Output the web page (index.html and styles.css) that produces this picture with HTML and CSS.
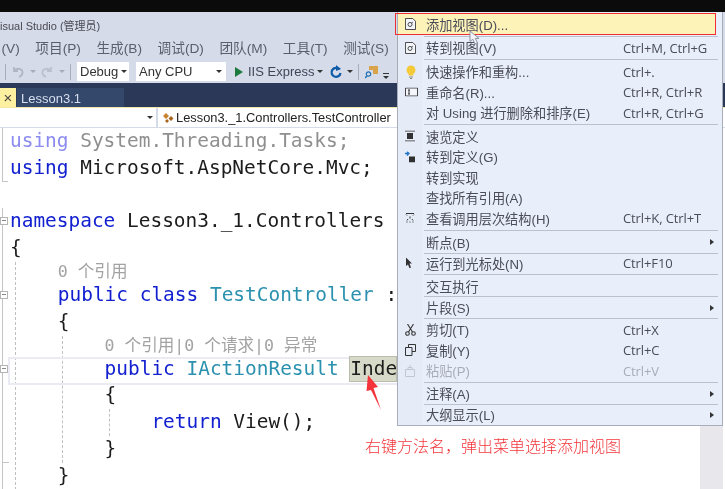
FILE: index.html
```html
<!DOCTYPE html>
<html lang="zh-CN">
<head>
<meta charset="utf-8">
<title>Visual Studio</title>
<link rel="stylesheet" href="styles.css">
</head>
<body>
<div class="page">
  <div class="blackbar"></div>
  <div class="chrome">
    <div class="title">isual Studio (管理员)</div>
    <div class="menubar">
      <span>(V)</span><span>项目(P)</span><span>生成(B)</span><span>调试(D)</span><span>团队(M)</span><span>工具(T)</span><span>测试(S)</span>
    </div>
    <div class="toolbar">
      <i class="vsep"></i>
      <svg class="undo" width="14" height="14" viewBox="0 0 14 14"><path d="M3 2v4h4M3.500 5.500C6 3 11 3 11.500 7c.3 2.500-1.500 4-3.500 5" fill="none" stroke="#b0b5c2" stroke-width="1.800"/></svg>
      <i class="caret dim c-undo"></i>
      <svg class="redo" width="14" height="14" viewBox="0 0 14 14"><path d="M11 2v4H7M10.500 5.500C8 3 3 3 2.500 7c-.3 2.500 1.500 4 3.500 5" fill="none" stroke="#bbc0cc" stroke-width="1.800"/></svg>
      <i class="caret dim c-redo"></i>
      <i class="vsep v2"></i>
      <div class="combo debug">Debug<i class="caret"></i></div>
      <div class="combo cpu">Any CPU<i class="caret"></i></div>
      <svg class="play" width="10" height="12" viewBox="0 0 10 12"><path d="M1 1l8 5-8 5z" fill="#1e7a3c"/></svg>
      <span class="iis">IIS Express</span><i class="caret c-iis"></i>
      <svg class="refresh" width="14" height="14" viewBox="0 0 14 14"><path d="M10.500 4.500A4.500 4.500 0 1 0 11.500 8" fill="none" stroke="#0e5ca8" stroke-width="2.200"/><path d="M7 0l5 4-5 2z" fill="#0e5ca8"/></svg>
      <i class="caret c-ref"></i>
      <i class="vsep v3"></i>
      <svg class="find" width="14" height="14" viewBox="0 0 14 14"><path d="M4 1h9v8H8V5H4z" fill="#d9a34c"/><circle cx="3.500" cy="9" r="2.200" fill="none" stroke="#1f6fb5" stroke-width="1.200"/><path d="M2 11l-2 2" stroke="#1f6fb5" stroke-width="1.400"/></svg>
      <svg class="more" width="6" height="7" viewBox="0 0 6 7"><path d="M0 .5h6" stroke="#333"/><path d="M0 3h6L3 6z" fill="#333"/></svg>
    </div>
    <div class="tabstrip">
      <div class="tab-active">×</div>
      <div class="tab">Lesson3.1</div>
    </div>
    <div class="navbar">
      <div class="nav-field left"><i class="caret"></i></div>
      <div class="nav-field right">
        <svg width="12" height="12" viewBox="0 0 12 12"><path d="M4 1l3 3-3 3-3-3z" fill="#c9822e"/><path d="M9 4l2.500 2.500L9 9 6.500 6.500zM5 7l2 2-2 2-2-2z" fill="#a8641c"/></svg>
        <span>Lesson3._1.Controllers.TestController</span>
      </div>
    </div>
  </div>

  <div class="editor">
    <div class="margin usings">
      <div class="line dim"><b class="kw">using</b> System.Threading.Tasks;</div>
      <div class="line"><b class="kw">using</b> Microsoft.AspNetCore.Mvc;</div>
    </div>
    <div class="line blank"></div>
    <div class="margin ns">
      <div class="line"><i class="fold"></i><b class="kw">namespace</b> Lesson3._1.Controllers</div>
      <div class="line">{</div>
      <div class="scope s1">
        <div class="lens">0 个引用</div>
        <div class="line"><i class="fold f2"></i><b class="kw">public</b> <b class="kw">class</b> <b class="ty">TestController</b> :</div>
        <div class="line">{</div>
        <div class="scope s2">
          <div class="lens">0 个引用|0 个请求|0 异常</div>
          <div class="line current"><i class="fold f3"></i><b class="kw">public</b> <b class="ty">IActionResult</b> <span class="sel">Inde</span></div>
          <div class="line">{</div>
          <div class="scope s3">
            <div class="line"><b class="kw">return</b> View();</div>
          </div>
          <div class="line end">}</div>
        </div>
        <div class="line">}</div>
      </div>
    </div>
    <div class="scrollbar"></div>
  </div>

  <svg class="arrow" width="20" height="38" viewBox="0 0 20 38"><path d="M3 0l10 12-4.500 1L16 35 6 15 1.500 16z" fill="#f5333a"/></svg>
  <div class="note">右键方法名，弹出菜单选择添加视图</div>

  <div class="menu">
    <div class="item first"><svg class="ico" width="11" height="12" viewBox="0 0 12 13"><use href="#doc"/></svg><span class="lbl">添加视图(D)...</span></div>
    <i class="sep mid"></i>
    <div class="item"><svg class="ico" width="11" height="12" viewBox="0 0 12 13"><use href="#doc"/></svg><span class="lbl">转到视图(V)</span><span class="key">Ctrl+M, Ctrl+G</span></div>
    <i class="sep"></i>
    <div class="item"><svg class="ico" width="12" height="15" viewBox="0 0 12 15"><path d="M6 1a4.500 4.500 0 0 0-2.500 8.200V11h5V9.200A4.500 4.500 0 0 0 6 1z" fill="#f4c93a"/><path d="M4 12.500h4M5 14h2" stroke="#8a8a80"/></svg><span class="lbl">快速操作和重构...</span><span class="key">Ctrl+.</span></div>
    <div class="item"><svg class="ico" width="13" height="9" viewBox="0 0 13 9"><path d="M.5.500h12v8H.500z" fill="#f3f5fb" stroke="#444"/><path d="M3 2.500h2M4 2.500v4M3 6.500h2" stroke="#333"/></svg><span class="lbl">重命名(R)...</span><span class="key">Ctrl+R, Ctrl+R</span></div>
    <div class="item"><span class="lbl">对 Using 进行删除和排序(E)</span><span class="key">Ctrl+R, Ctrl+G</span></div>
    <i class="sep"></i>
    <div class="item"><svg class="ico" width="10" height="11" viewBox="0 0 10 11"><path d="M0 .5h10M0 10.500h10" stroke="#333"/><path d="M2 2.500h6v6H2z" fill="#333"/></svg><span class="lbl">速览定义</span></div>
    <div class="item"><svg class="ico" width="11" height="11" viewBox="0 0 11 11"><path d="M0 2h3M2 0l2 2-2 2" fill="none" stroke="#1c72c4" stroke-width="1.300"/><path d="M4 5h6v6H4z" fill="#2f2f2f"/></svg><span class="lbl">转到定义(G)</span></div>
    <div class="item"><span class="lbl">转到实现</span></div>
    <div class="item"><span class="lbl">查找所有引用(A)</span></div>
    <div class="item"><svg class="ico" width="10" height="10" viewBox="0 0 10 10"><path d="M1 .5h8M1 1.500l1 1M9 1.500l-1 1M5 3.500v2M1.500 9h1M7.500 9h1M4.500 9h1M3 6l-1 1.500M7 6l1 1.500" stroke="#333" fill="none"/></svg><span class="lbl">查看调用层次结构(H)</span><span class="key">Ctrl+K, Ctrl+T</span></div>
    <i class="sep"></i>
    <div class="item"><span class="lbl">断点(B)</span><i class="sub"></i></div>
    <i class="sep tight"></i>
    <div class="item"><svg class="ico" width="8" height="11" viewBox="0 0 8 11"><path d="M1 0l6 6H4.500L6 10l-1.500.7L3 7 1 8.500z" fill="#333"/></svg><span class="lbl">运行到光标处(N)</span><span class="key">Ctrl+F10</span></div>
    <i class="sep mid"></i>
    <div class="item"><span class="lbl">交互执行</span></div>
    <i class="sep thin"></i>
    <div class="item"><span class="lbl">片段(S)</span><i class="sub"></i></div>
    <i class="sep thin"></i>
    <div class="item"><svg class="ico" width="11" height="12" viewBox="0 0 11 12"><path d="M2.500 0l5 8M8.500 0l-5 8" stroke="#333" stroke-width="1.100" fill="none"/><circle cx="2.500" cy="9.500" r="1.800" fill="none" stroke="#333" stroke-width="1.100"/><circle cx="8.500" cy="9.500" r="1.800" fill="none" stroke="#333" stroke-width="1.100"/></svg><span class="lbl">剪切(T)</span><span class="key">Ctrl+X</span></div>
    <div class="item"><svg class="ico" width="11" height="12" viewBox="0 0 11 12"><path d="M3.500 3V.5h7v7H7" fill="none" stroke="#333"/><path d="M.5 3.500h6.500v8H.500z" fill="none" stroke="#333"/></svg><span class="lbl">复制(Y)</span><span class="key">Ctrl+C</span></div>
    <div class="item off"><svg class="ico" width="10" height="12" viewBox="0 0 10 12"><path d="M.5 4.500h9v7h-9zM3 4.500V2.500h4v2" fill="none" stroke="#c2c6d0"/><path d="M4 1h2" stroke="#c2c6d0"/></svg><span class="lbl">粘贴(P)</span><span class="key">Ctrl+V</span></div>
    <i class="sep mid"></i>
    <div class="item"><span class="lbl">注释(A)</span><i class="sub"></i></div>
    <i class="sep tight"></i>
    <div class="item"><span class="lbl">大纲显示(L)</span><i class="sub"></i></div>
  </div>
  <div class="redbox"></div>
  <svg class="cursor" width="12" height="15" viewBox="0 0 12 15"><path d="M1 1v10.500l2.800-2.300L6 14l2.500-1-2.200-4.600H10z" fill="#f4f5f8" stroke="#8d93a3"/></svg>

  <svg class="defs" width="0" height="0"><defs><g id="doc"><path d="M.5.500h8l3 3v9H.500z" fill="#f3f5fb" stroke="#3c3c3c"/><circle cx="5.500" cy="7" r="2.200" fill="none" stroke="#3c3c3c"/><path d="M7 5.500l1.500-1" stroke="#3c3c3c"/></g></defs></svg>
</div>
</body>
</html>
```

FILE: styles.css
```css
* { box-sizing: border-box; }
html, body { margin: 0; padding: 0; background: #fff; }
.page {
  position: relative;
  width: 725px;
  height: 489px;
  overflow: hidden;
  font-family: "Noto Sans CJK SC", "Liberation Sans", sans-serif;
  filter: blur(0.35px);
}
.blackbar { height: 12px; background: #0b0b0b; }
.chrome { background: #d6dbe9; }
.title {
  height: 25px;
  padding-top: 6px;
  font-size: 11px;
  line-height: 16px;
  color: #4a4a52;
  font-family: "Liberation Sans", "Noto Sans CJK SC", sans-serif;
  white-space: nowrap;
}
.menubar {
  display: flex;
  gap: 15.500px;
  height: 23px;
  padding-left: 1.500px;
  font-size: 13.700px;
  line-height: 23px;
  color: #5b5f6a;
  white-space: nowrap;
  font-family: "Liberation Sans", "Noto Sans CJK SC", sans-serif;
}
.toolbar {
  display: flex;
  align-items: center;
  height: 23px;
  padding-left: 5px;
}
.vsep { width: 1px; height: 16px; background: #a9aebc; flex: none; }
.vsep.v2 { margin-left: 5px; }
.vsep.v3 { margin-left: 5px; }
.undo { margin-left: 5px; flex: none; }
.redo { margin-left: 4px; flex: none; }
.caret {
  display: inline-block;
  width: 0; height: 0;
  border-left: 3px solid transparent;
  border-right: 3px solid transparent;
  border-top: 3px solid #333;
  flex: none;
}
.caret.dim { border-top-color: #a6abb8; }
.c-undo { margin-left: 5px; }
.c-redo { margin-left: 5px; }
.c-iis { margin-left: 3px; }
.c-ref { margin-left: 4px; }
.combo {
  display: flex;
  align-items: center;
  justify-content: space-between;
  height: 19px;
  background: #fff;
  font-family: "Liberation Sans", sans-serif;
  font-size: 13px;
  color: #333;
  padding: 0 2px 0 3px;
}
.combo.debug { width: 52px; margin-left: 6px; overflow: hidden; }
.combo.cpu { width: 90px; margin-left: 7px; padding-right: 4px; }
.play { margin-left: 8px; flex: none; }
.iis { margin-left: 4px; width: 66px; font-family: "Liberation Sans", sans-serif; font-size: 13px; color: #3f4658; white-space: nowrap; }
.refresh { margin-left: 6px; flex: none; }
.find { margin-left: 6px; flex: none; }
.more { margin: 10px 0 0 4px; flex: none; }
.tabstrip {
  display: flex;
  height: 25px;
  padding-top: 5px;
  background: #2b3857;
  border-bottom: 1px solid #f0e7a8;
}
.tab-active {
  width: 16px;
  background: #fdf0a0;
  color: #444;
  font: 15px/19px "Liberation Sans", sans-serif;
  text-align: center;
}
.tab {
  width: 107px;
  margin-left: 1px;
  padding-left: 4px;
  background: #34486c;
  color: #d8dfee;
  font: 13px/21px "Liberation Sans", sans-serif;
}
.navbar {
  display: flex;
  height: 20px;
  gap: 2px;
  padding-bottom: 1px;
}
.nav-field { background: #fff; display: flex; align-items: center; height: 19px; }
.nav-field.left { width: 156px; justify-content: flex-end; padding-right: 3px; }
.nav-field.right {
  flex: 1;
  padding-left: 4px;
  gap: 2px;
  font: 12.850px "Liberation Sans", sans-serif;
  color: #222;
  white-space: nowrap;
  overflow: hidden;
}
.nav-field svg { flex: none; }

.editor {
  position: relative;
  height: 361px;
  overflow: hidden;
  padding-left: 2px;
  background: #fff;
  font-family: "DejaVu Sans Mono", monospace;
  font-size: 19.450px;
  color: #1c1c1c;
}
.line {
  position: relative;
  height: 26.800px;
  line-height: 26.800px;
  white-space: pre;
}
.line b { font-weight: 400; }
.kw { color: #1220d0; }
.ty { color: #2b91af; }
.dim { color: #8f8f8f; }
.dim .kw { color: #8b8bf0; }
.margin { border-left: 1px solid #c4c4c4; padding-left: 7px; }
.usings { position: relative; }
.usings::after {
  content: "";
  position: absolute;
  left: -1px;
  bottom: 0;
  width: 6px;
  border-bottom: 1px solid #c4c4c4;
}
.end::before {
  content: "";
  position: absolute;
  left: -102px;
  bottom: 0;
  width: 6px;
  border-bottom: 1px solid #c4c4c4;
}
.blank { padding-left: 8px; }
.fold {
  position: absolute;
  left: -10px;
  top: 9px;
  width: 8px;
  height: 8px;
  background: #fff;
  border: 1px solid #b4b4b4;
}
.fold::after {
  content: "";
  position: absolute;
  left: 1px;
  top: 2px;
  width: 4px;
  border-top: 1px solid #888;
}
.fold.f2 { left: -58px; }
.fold.f3 { left: -105px; }
.scope { border-left: 1px dashed #c0c0c0; }
.s1 { margin-left: 5px; padding-left: 41.800px; }
.s2 { margin-left: 4.500px; padding-left: 41.300px; }
.s3 { margin-left: 4px; padding-left: 41.800px; }
.lens {
  height: 20px;
  font-family: "DejaVu Sans Mono", "Noto Sans CJK SC", monospace;
  font-size: 16.600px;
  line-height: 20px;
  color: #a3a3a3;
  white-space: pre;
}
.current::before {
  content: "";
  position: absolute;
  left: -97px;
  top: 1px;
  width: 400px;
  height: 24px;
  border: 2px solid #ebebf3;
}
.sel { position: relative; background: #d7dac8; display: inline-block; width: 46px; height: 24px; line-height: 24px; outline: 1px solid #b9bdac; }
.scrollbar {
  position: absolute;
  right: 2px;
  top: 0;
  bottom: 0;
  width: 23px;
  background: #e7e7ec;
}
.arrow { position: absolute; left: 365px; top: 375px; }
.note {
  position: absolute;
  left: 365px;
  top: 435px;
  font-size: 16px;
  line-height: 20px;
  color: #f3353a;
  white-space: nowrap;
  font-family: "Noto Sans CJK SC", sans-serif;
  font-weight: 300;
}

.menu {
  position: absolute;
  left: 397px;
  top: 12px;
  width: 326px;
  height: 414px;
  padding-top: 1px;
  background: linear-gradient(to right, #e6ebf8 0 24px, #e9eefb 24px);
  border: 1px solid #a9adba;
  border-top: 0;
}
.item {
  display: flex;
  align-items: center;
  height: 20.500px;
  font-size: 13.200px;
  color: #4a4d58;
  white-space: nowrap;
  position: relative;
}
.item.first { height: 22px; background: #fdf2b8; margin-right: 7px; }
.item.off { color: #a9adb8; }
.ico { position: absolute; left: 7px; top: 50%; transform: translateY(-50%); }
.lbl { margin-left: 28px; width: 197px; font-family: "Liberation Sans", "Noto Sans CJK SC", sans-serif; }
.key { font: 13px "Open Sans", "Liberation Sans", sans-serif; letter-spacing: -0.100px; }
.sep { display: block; height: 3.400px; margin-left: 26px; margin-right: 4px; padding-top: 1px; }
.sep.mid { height: 2.400px; padding-top: 1px; }
.sep.thin { height: 1.400px; padding-top: 0; }
.sep.tight { height: 0.400px; padding-top: 0; }
.sep::before { content: ""; display: block; border-top: 1px solid #bcc1d0; }
.sub {
  position: absolute;
  right: 8px;
  top: 50%;
  margin-top: -3px;
  border-top: 3px solid transparent;
  border-bottom: 3px solid transparent;
  border-left: 4px solid #333;
}
.redbox {
  position: absolute;
  left: 395px;
  top: 13px;
  width: 321px;
  height: 22px;
  border: 1px solid #ef2f2f;
}
.cursor { position: absolute; left: 469px; top: 30px; }
.defs { position: absolute; }
```
